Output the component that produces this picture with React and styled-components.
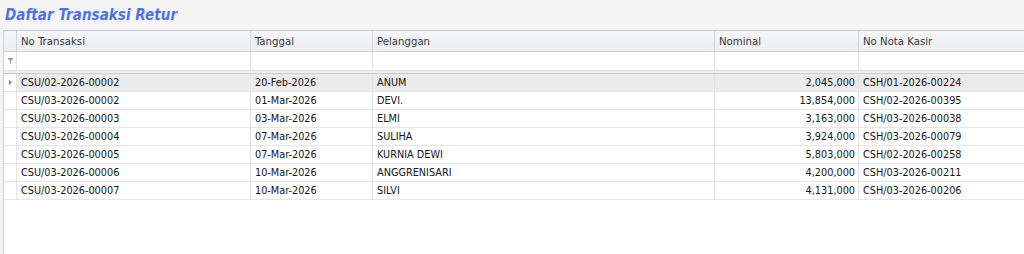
import React from 'react';
import styled, { createGlobalStyle } from 'styled-components';

const GlobalStyle = createGlobalStyle`
  html, body {
    margin: 0;
    padding: 0;
    background: #f4f4f4;
  }
  * {
    box-sizing: border-box;
  }
`;

const COLS = '13px 234px 122px 342px 144px 1fr';

const Page = styled.div`
  width: 1024px;
  height: 254px;
  display: flex;
  flex-direction: column;
  background: #f4f4f4;
  overflow: hidden;
  font-family: 'DejaVu Sans Condensed', 'DejaVu Sans', sans-serif;
`;

const Title = styled.h1`
  margin: 0;
  height: 30px;
  padding: 5px 0 0 5px;
  font-size: 15px;
  font-weight: bold;
  font-style: italic;
  color: #4f72e3;
  line-height: 20px;
  letter-spacing: 0.05px;
`;

const Grid = styled.div`
  flex: 1;
  margin-left: 3px;
  background: #ffffff;
  border-left: 1px solid #cfcfcf;
  display: flex;
  flex-direction: column;
`;

const Row = styled.div`
  display: grid;
  grid-template-columns: ${COLS};
  height: ${(p) => p.h}px;
  background: ${(p) => p.bg || '#ffffff'};
  border-top: ${(p) => (p.top ? `1px solid ${p.top}` : 'none')};
  border-bottom: 1px solid ${(p) => p.line || '#e6e6e6'};
`;

const HeaderRow = styled(Row)`
  background: linear-gradient(#f6f7f9, #eceef1);
`;

const Cell = styled.div`
  display: flex;
  align-items: center;
  justify-content: ${(p) => (p.right ? 'flex-end' : 'flex-start')};
  padding: ${(p) => (p.right ? '0 3px 0 0' : '0 0 0 4px')};
  border-right: 1px solid ${(p) => p.line || '#e3e3e3'};
  font-size: ${(p) => (p.head ? '11.3px' : '10.8px')};
  color: ${(p) => (p.head ? '#383838' : '#141414')};
  white-space: nowrap;
  overflow: hidden;

  &:last-child {
    border-right: none;
  }
`;

const IndicatorCell = styled.div`
  display: flex;
  align-items: center;
  justify-content: center;
  border-right: 1px solid ${(p) => p.line || '#e3e3e3'};
  background: ${(p) => p.bg || 'transparent'};
`;

const Separator = styled.div`
  height: 3px;
  background: #efefef;
  border-bottom: 1px solid #cbcbcb;
`;

const Funnel = () => (
  <svg width="7" height="8" viewBox="0 0 7 8">
    <path d="M0.5 1 H6.5 L4 4 V7 L3 6.5 V4 Z" fill="#9a9a9a" />
  </svg>
);

const Arrow = () => (
  <svg width="5" height="7" viewBox="0 0 5 7">
    <path d="M1 0.5 L4 3.5 L1 6.5 Z" fill="#8c8c8c" />
  </svg>
);

const headers = ['No Transaksi', 'Tanggal', 'Pelanggan', 'Nominal', 'No Nota Kasir'];

const rows = [
  ['CSU/02-2026-00002', '20-Feb-2026', 'ANUM', '2,045,000', 'CSH/01-2026-00224'],
  ['CSU/03-2026-00002', '01-Mar-2026', 'DEVI.', '13,854,000', 'CSH/02-2026-00395'],
  ['CSU/03-2026-00003', '03-Mar-2026', 'ELMI', '3,163,000', 'CSH/03-2026-00038'],
  ['CSU/03-2026-00004', '07-Mar-2026', 'SULIHA', '3,924,000', 'CSH/03-2026-00079'],
  ['CSU/03-2026-00005', '07-Mar-2026', 'KURNIA DEWI', '5,803,000', 'CSH/02-2026-00258'],
  ['CSU/03-2026-00006', '10-Mar-2026', 'ANGGRENISARI', '4,200,000', 'CSH/03-2026-00211'],
  ['CSU/03-2026-00007', '10-Mar-2026', 'SILVI', '4,131,000', 'CSH/03-2026-00206'],
];

export default function App() {
  return (
    <Page>
      <GlobalStyle />
      <Title>Daftar Transaksi Retur</Title>
      <Grid>
        <HeaderRow h={22} top="#c9ccd0" line="#cdd0d4">
          <IndicatorCell line="#d2d5d9" />
          {headers.map((h) => (
            <Cell key={h} head line="#d2d5d9">
              {h}
            </Cell>
          ))}
        </HeaderRow>
        <Row h={19} line="#e2e2e2">
          <IndicatorCell>
            <Funnel />
          </IndicatorCell>
          {headers.map((h) => (
            <Cell key={h} />
          ))}
        </Row>
        <Separator />
        {rows.map((r, i) => (
          <Row key={r[0]} h={18} bg={i === 0 ? '#ebebeb' : '#ffffff'}>
            <IndicatorCell bg="#ffffff">{i === 0 && <Arrow />}</IndicatorCell>
            {r.map((v, j) => (
              <Cell key={j} right={j === 3}>
                {v}
              </Cell>
            ))}
          </Row>
        ))}
      </Grid>
    </Page>
  );
}
